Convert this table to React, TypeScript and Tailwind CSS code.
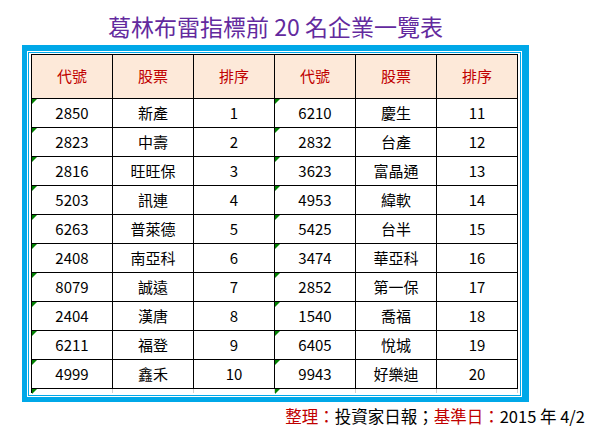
import React from "react";

const rows: [string, string, string, string, string, string][] = [
  ["2850", "新產", "1", "6210", "慶生", "11"],
  ["2823", "中壽", "2", "2832", "台產", "12"],
  ["2816", "旺旺保", "3", "3623", "富晶通", "13"],
  ["5203", "訊連", "4", "4953", "緯軟", "14"],
  ["6263", "普萊德", "5", "5425", "台半", "15"],
  ["2408", "南亞科", "6", "3474", "華亞科", "16"],
  ["8079", "誠遠", "7", "2852", "第一保", "17"],
  ["2404", "漢唐", "8", "1540", "喬福", "18"],
  ["6211", "福登", "9", "6405", "悅城", "19"],
  ["4999", "鑫禾", "10", "9943", "好樂迪", "20"],
];

const headers = ["代號", "股票", "排序", "代號", "股票", "排序"];

function Tri() {
  return (
    <span className="absolute left-0 top-0 w-0 h-0 border-t-[5px] border-r-[5px] border-t-[#008000] border-r-transparent" />
  );
}

export default function App() {
  const font = { fontFamily: '"Noto Sans CJK TC", "Noto Sans", sans-serif' };
  return (
    <div className="w-[600px] h-[438px] bg-white relative" style={font}>
      <div className="ml-[22px] w-[507px]">
        <div className="h-[45px] pt-[11px] text-center text-[23px] leading-[30px] text-[#632a9e] font-normal">
          葛林布雷指標前 20 名企業一覽表
        </div>
        <div className="border-[#00a8e8] border-l-[5px] border-t-[6px] border-r-[7px] border-b-[5px] bg-white p-px">
          <div className="border border-[#00a8e8] px-[2px] pt-[1px] pb-[2px] bg-white">
            <div className="border-l border-t border-black grid grid-cols-[repeat(6,81px)] w-[487px]">
              {headers.map((h, i) => (
                <div
                  key={"h" + i}
                  className="h-[44px] bg-[#fde9d9] border-r border-b border-black flex items-center justify-center text-[15px] text-[#c00000]"
                >
                  {h}
                </div>
              ))}
              {rows.map((r, ri) =>
                r.map((c, ci) => (
                  <div
                    key={ri + "-" + ci}
                    className="relative h-[29px] border-r border-b border-black flex items-center justify-center text-[15px] text-black"
                  >
                    {(ci === 0 || ci === 3) && <Tri />}
                    {c}
                  </div>
                ))
              )}
              {[0, 1, 2, 3, 4, 5].map((ci) => (
                <div key={"e" + ci} className="relative h-[4px] border-r border-[#d0d0d0]">
                  {(ci === 0 || ci === 3) && <Tri />}
                </div>
              ))}
            </div>
          </div>
        </div>
      </div>
      <div className="mt-[2px] pr-[15px] text-right text-[16.5px] leading-[24px] text-black">
        <span className="text-[#c00000]">整理：</span>投資家日報；<span className="text-[#c00000]">基準日：</span>2015 年 4/2
      </div>
    </div>
  );
}
